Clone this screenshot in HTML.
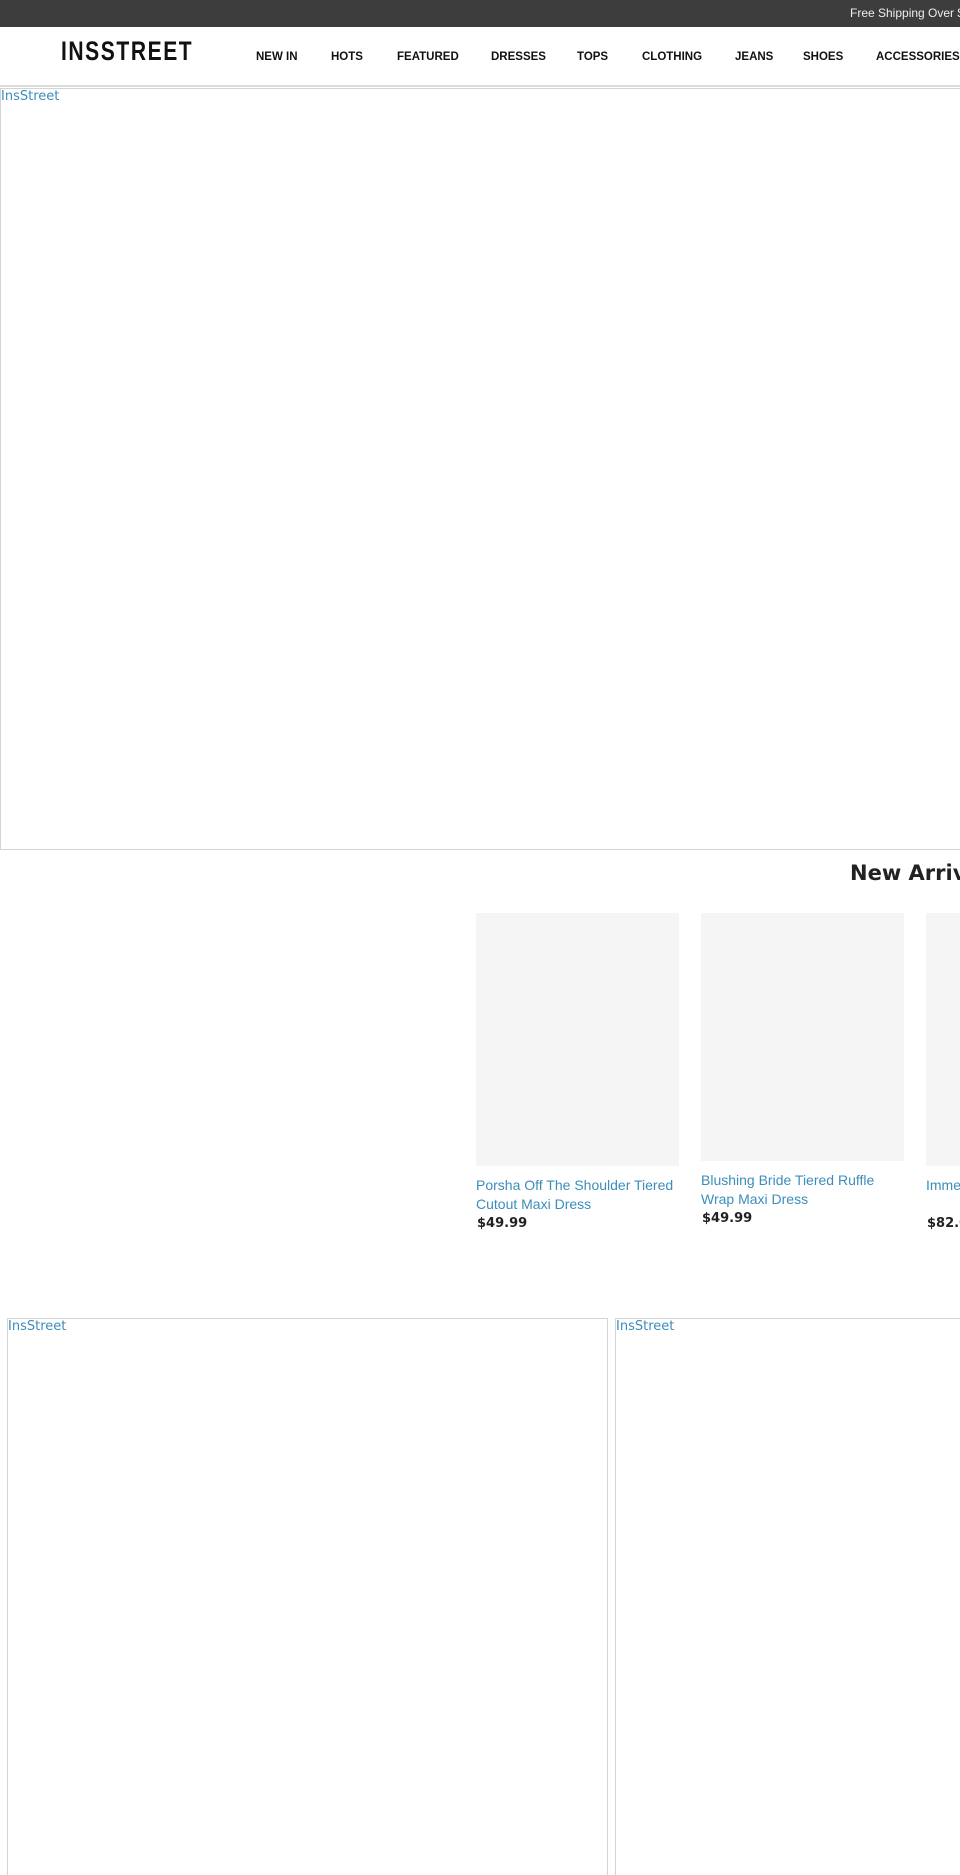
<!DOCTYPE html>
<html><head><meta charset="utf-8"><style>
*{margin:0;padding:0;box-sizing:border-box}
html{width:960px;height:1875px;overflow:hidden}
body{width:960px;height:1875px;overflow:hidden;background:#fff;font-family:"DejaVu Sans","Liberation Sans",sans-serif;position:relative}
.top{position:absolute;left:0;top:0;width:960px;height:27px;background:#3d3d3d;overflow:hidden}
.top span{position:absolute;left:850px;top:6px;color:#eee;font-size:12px;white-space:nowrap;font-family:"Liberation Sans",sans-serif}
.hdr{position:absolute;left:0;top:27px;width:960px;height:60px;border-bottom:2px solid #ddd;overflow:hidden}
.logo{position:absolute;left:61px;top:13px;font-family:"Liberation Sans",sans-serif;font-weight:bold;font-size:27px;letter-spacing:2px;color:#111;transform:scaleX(0.78);transform-origin:left;line-height:22px;height:22px}
.nav{position:absolute;top:24px;font-size:11.5px;font-weight:bold;color:#111;white-space:nowrap;font-family:"Liberation Sans",sans-serif}
.frame{position:absolute;border:1px solid #d4d4d4}
.frame span{position:absolute;left:0;top:0;font-size:13px;color:#3c8dbc;font-family:"DejaVu Sans",sans-serif}
h2{position:absolute;left:850px;top:861px;font-size:21px;font-weight:bold;color:#222;white-space:nowrap}
.img{position:absolute;background:#f5f5f5}
.t{position:absolute;font-size:14px;line-height:19px;color:#3c8dbc;width:205px;font-family:"Liberation Sans",sans-serif}
.p{position:absolute;font-size:13px;font-weight:bold;color:#222}
</style></head><body>
<div class="top"><span>Free Shipping Over $</span></div>
<div class="hdr">
<div class="logo">INSSTREET</div>
<div class="nav" style="left:256px">NEW IN</div>
<div class="nav" style="left:331px">HOTS</div>
<div class="nav" style="left:397px">FEATURED</div>
<div class="nav" style="left:491px">DRESSES</div>
<div class="nav" style="left:577px">TOPS</div>
<div class="nav" style="left:642px">CLOTHING</div>
<div class="nav" style="left:735px">JEANS</div>
<div class="nav" style="left:803px">SHOES</div>
<div class="nav" style="left:876px">ACCESSORIES</div>
</div>
<div class="frame" style="left:0;top:88px;width:980px;height:762px"><span>InsStreet</span></div>
<h2>New Arrivals</h2>
<div class="img" style="left:476px;top:913px;width:203px;height:253px"></div>
<div class="t" style="left:476px;top:1176px">Porsha Off The Shoulder Tiered Cutout Maxi Dress</div>
<div class="p" style="left:477px;top:1216px">$49.99</div>
<div class="img" style="left:701px;top:913px;width:203px;height:248px"></div>
<div class="t" style="left:701px;top:1171px">Blushing Bride Tiered Ruffle Wrap Maxi Dress</div>
<div class="p" style="left:702px;top:1211px">$49.99</div>
<div class="img" style="left:926px;top:913px;width:203px;height:253px"></div>
<div class="t" style="left:926px;top:1176px">Immersive Mesh Dress</div>
<div class="p" style="left:927px;top:1216px">$82.00</div>
<div class="frame" style="left:7px;top:1318px;width:601px;height:600px"><span>InsStreet</span></div>
<div class="frame" style="left:615px;top:1318px;width:400px;height:600px"><span>InsStreet</span></div>
</body></html>
